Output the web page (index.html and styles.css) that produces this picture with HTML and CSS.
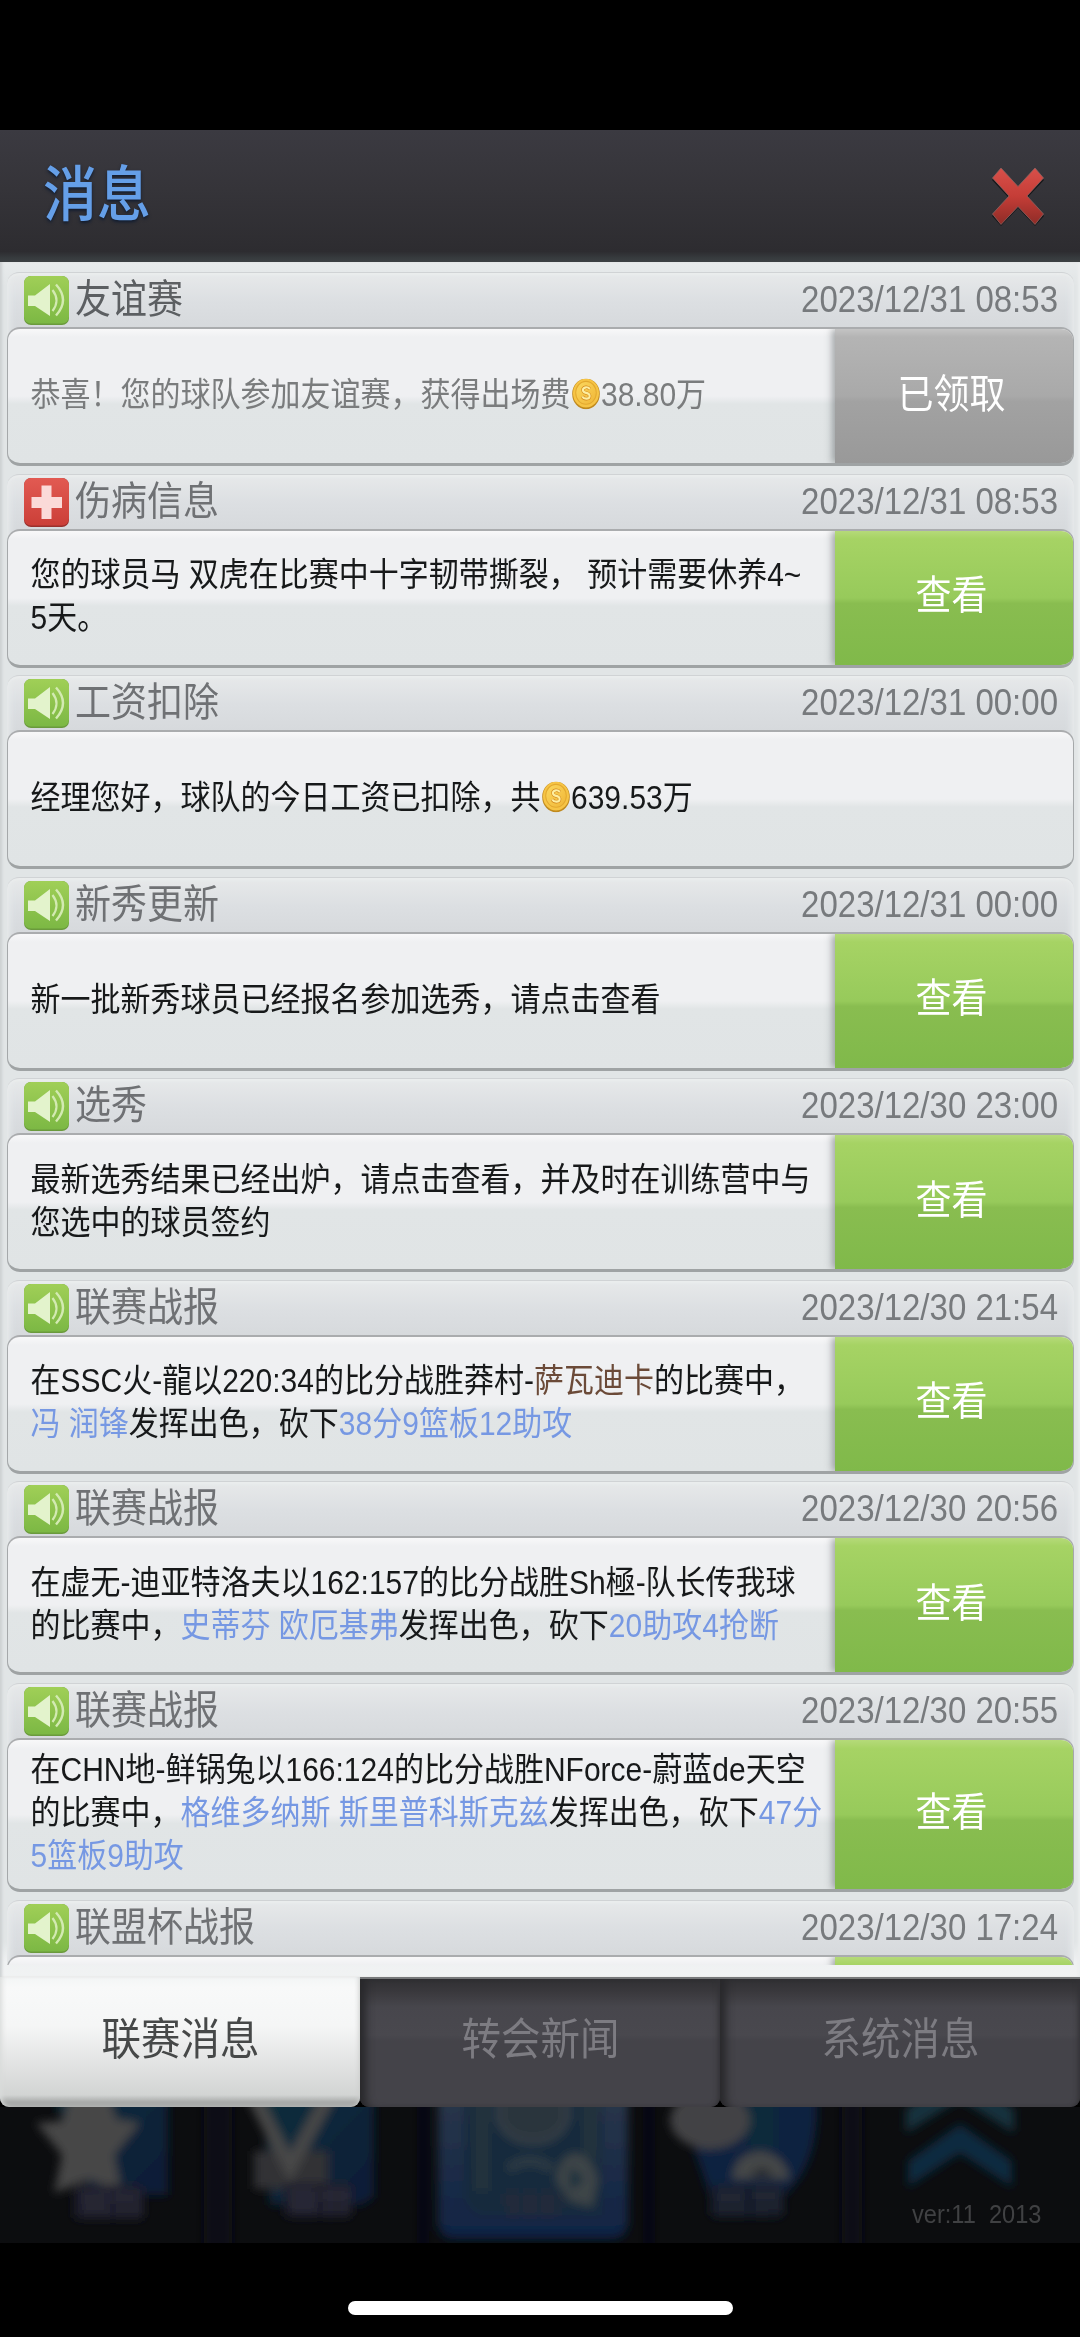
FILE: index.html
```html
<!DOCTYPE html>
<html lang="zh-CN">
<head>
<meta charset="utf-8">
<title>消息</title>
<link rel="stylesheet" href="styles.css">
</head>
<body>
<svg class="defs" width="0" height="0" aria-hidden="true">
  <defs>
    <linearGradient id="gGreen" x1="0" y1="0" x2="0" y2="1"><stop offset="0" stop-color="#a0cf57"/><stop offset="1" stop-color="#7cb844"/></linearGradient>
    <linearGradient id="gRed" x1="0" y1="0" x2="0" y2="1"><stop offset="0" stop-color="#e25a52"/><stop offset="1" stop-color="#cb3f38"/></linearGradient>
    <linearGradient id="gClose" x1="0" y1="0" x2="0" y2="1"><stop offset="0" stop-color="#d8504a"/><stop offset=".5" stop-color="#c53d37"/><stop offset="1" stop-color="#8e2c27"/></linearGradient>
    <linearGradient id="gCoin" x1="0" y1="0" x2="1" y2="1"><stop offset="0" stop-color="#fbd860"/><stop offset="1" stop-color="#f0b636"/></linearGradient>
  </defs>
  <symbol id="speaker" viewBox="0 0 45 49">
    <rect width="45" height="49" rx="7" fill="#6a9a3c"/>
    <rect width="45" height="47.5" rx="7" fill="url(#gGreen)"/>
    <path d="M4 19.5h7L26 8v32L11 30H4z" fill="#e3f3cc"/>
    <path d="M28.500 14q8 10.500 0 21" fill="none" stroke="#d3eab2" stroke-width="2.200"/>
    <path d="M32 8.500q14 15.500 0 31" fill="none" stroke="#d3eab2" stroke-width="2.400"/>
  </symbol>
  <symbol id="cross" viewBox="0 0 45 49">
    <rect width="45" height="49" rx="7" fill="#99302c"/>
    <rect width="45" height="47.500" rx="7" fill="url(#gRed)"/>
    <path d="M17.500 7.500h10V19H38v11H27.500v11h-10V30H7.500V19h10z" fill="#fbdad8"/>
  </symbol>
  <symbol id="coin" viewBox="0 0 28 28">
    <circle cx="14" cy="14" r="13.800" fill="#c08a1e"/>
    <circle cx="14" cy="13.300" r="13" fill="#f6c445"/>
    <circle cx="14" cy="13" r="10.300" fill="url(#gCoin)" stroke="#e3a92f" stroke-width="1"/>
    <path d="M17.800 9.700q-1.300-2-4-1.700-3.200.5-2.900 2.700.3 1.800 3.200 2.400 3.500.7 3.600 2.700 0 2.200-3.200 2.500-3 .1-4.300-2" fill="none" stroke="#d4891c" stroke-width="3.200"/>
    <path d="M17.800 9.700q-1.300-2-4-1.700-3.200.5-2.900 2.700.3 1.800 3.200 2.400 3.500.7 3.600 2.700 0 2.200-3.200 2.500-3 .1-4.300-2" fill="none" stroke="#fdeea0" stroke-width="2"/>
  </symbol>
</svg>

<header class="header">
  <h1 class="header-title tall">消息</h1>
  <svg class="close" viewBox="0 0 54 62">
    <path d="M10 3L27 21 44 3l9 11-16 17 16 19-9 10L27 42 10 60 1 50 17 31 1 14z" fill="#17171a"/>
    <path d="M10 2L27 20.500 44 2l8.500 10L36 30l16.500 18L44 58.500 27 40.500 10 58.500 1.500 48 18 30 1.500 12z" fill="url(#gClose)" stroke="#8d6361" stroke-width=".8"/>
  </svg>
</header>

<main class="panel">
  <ul class="list">
    <li class="item read">
      <div class="strip"><svg class="icon"><use href="#speaker"/></svg><span class="name tall">友谊赛</span><time class="tall">2023/12/31 08:53</time></div>
      <div class="card"><p class="msg tall">恭喜！您的球队参加友谊赛，获得出场费<svg class="coin"><use href="#coin"/></svg>38.80万</p><button class="btn done"><span class="tall">已领取</span></button></div>
    </li>
    <li class="item">
      <div class="strip"><svg class="icon"><use href="#cross"/></svg><span class="name tall">伤病信息</span><time class="tall">2023/12/31 08:53</time></div>
      <div class="card"><p class="msg tall">您的球员马 双虎在比赛中十字韧带撕裂， 预计需要休养4~<br>5天。</p><button class="btn"><span class="tall">查看</span></button></div>
    </li>
    <li class="item">
      <div class="strip"><svg class="icon"><use href="#speaker"/></svg><span class="name tall">工资扣除</span><time class="tall">2023/12/31 00:00</time></div>
      <div class="card"><p class="msg tall">经理您好，球队的今日工资已扣除，共<svg class="coin"><use href="#coin"/></svg>639.53万</p></div>
    </li>
    <li class="item">
      <div class="strip"><svg class="icon"><use href="#speaker"/></svg><span class="name tall">新秀更新</span><time class="tall">2023/12/31 00:00</time></div>
      <div class="card"><p class="msg tall">新一批新秀球员已经报名参加选秀，请点击查看</p><button class="btn"><span class="tall">查看</span></button></div>
    </li>
    <li class="item">
      <div class="strip"><svg class="icon"><use href="#speaker"/></svg><span class="name tall">选秀</span><time class="tall">2023/12/30 23:00</time></div>
      <div class="card"><p class="msg tall">最新选秀结果已经出炉，请点击查看，并及时在训练营中与<br>您选中的球员签约</p><button class="btn"><span class="tall">查看</span></button></div>
    </li>
    <li class="item">
      <div class="strip"><svg class="icon"><use href="#speaker"/></svg><span class="name tall">联赛战报</span><time class="tall">2023/12/30 21:54</time></div>
      <div class="card"><p class="msg tall">在SSC火-龍以220:34的比分战胜莽村-<b class="team">萨瓦迪卡</b>的比赛中，<br><b class="hl">冯 润锋</b>发挥出色，砍下<b class="hl">38分9篮板12助攻</b></p><button class="btn"><span class="tall">查看</span></button></div>
    </li>
    <li class="item">
      <div class="strip"><svg class="icon"><use href="#speaker"/></svg><span class="name tall">联赛战报</span><time class="tall">2023/12/30 20:56</time></div>
      <div class="card"><p class="msg tall">在虚无-迪亚特洛夫以162:157的比分战胜Sh極-队长传我球<br>的比赛中，<b class="hl">史蒂芬 欧厄基弗</b>发挥出色，砍下<b class="hl">20助攻4抢断</b></p><button class="btn"><span class="tall">查看</span></button></div>
    </li>
    <li class="item long">
      <div class="strip"><svg class="icon"><use href="#speaker"/></svg><span class="name tall">联赛战报</span><time class="tall">2023/12/30 20:55</time></div>
      <div class="card"><p class="msg tall">在CHN地-鲜锅兔以166:124的比分战胜NForce-蔚蓝de天空<br>的比赛中，<b class="hl">格维多纳斯 斯里普科斯克兹</b>发挥出色，砍下<b class="hl">47分</b><br><b class="hl">5篮板9助攻</b></p><button class="btn"><span class="tall">查看</span></button></div>
    </li>
    <li class="item">
      <div class="strip"><svg class="icon"><use href="#speaker"/></svg><span class="name tall">联盟杯战报</span><time class="tall">2023/12/30 17:24</time></div>
      <div class="card"><p class="msg"></p><button class="btn"></button></div>
    </li>
  </ul>
</main>

<nav class="tabs">
  <a class="tab active"><span class="tall">联赛消息</span></a>
  <a class="tab"><span class="tall">转会新闻</span></a>
  <a class="tab"><span class="tall">系统消息</span></a>
</nav>

<footer class="dock">
  <svg class="dock-art" viewBox="0 0 1080 136">
    <defs>
      <filter id="soft" x="-10%" y="-30%" width="120%" height="160%"><feGaussianBlur stdDeviation="5"/></filter>
      <linearGradient id="tile" x1="0" y1="0" x2="1" y2="1"><stop offset="0" stop-color="#10303b"/><stop offset="1" stop-color="#0e1b38"/></linearGradient>
      <linearGradient id="frame" x1="0" y1="0" x2="0" y2="1"><stop offset="0" stop-color="#2b374a"/><stop offset="1" stop-color="#0f2344"/></linearGradient>
    </defs>
    <g filter="url(#soft)">
      <path d="M204-20h28v176h-28zM420-20h6v176h-6zM646-20h6v176h-6zM842-20h20v176h-20z" fill="#111114"/>
      <path d="M50-20H168V88H90z" fill="url(#tile)"/>
      <path d="M72-14h36l8 26 24 4-26 32 8 38-32-14-36 14 8-38-26-32 26-2z" fill="#464646"/>
      <rect x="74" y="78" width="70" height="34" rx="5" fill="#1b1d2c"/>
      <path d="M80 90h28M82 100h26M90 82v28M104 82v28M112 90h24M122 82v28M136 82v28" stroke="#2a2b38" stroke-width="4"/>
      <path d="M262-20H374V90l-12 8H270z" fill="url(#tile)"/>
      <path d="M254 44h74v38h-74z" fill="#303235"/>
      <path d="M254-10L290 60 328-10" fill="none" stroke="#474746" stroke-width="14"/>
      <rect x="284" y="76" width="68" height="34" rx="5" fill="#1d1f2c"/>
      <path d="M288 88h28M290 98h26M298 80v28M310 80v28M322 88h28M330 80v28M344 80v28" stroke="#2d2e3b" stroke-width="4"/>
      <path d="M438-20H628V114q0 18-18 18H456q-18 0-18-18z" fill="url(#frame)"/>
      <path d="M464-20H602V108H480q-16-8-16-24z" fill="#152a3c"/>
      <path d="M482-10V84M590-10V50" stroke="#28353e" stroke-width="12"/>
      <ellipse cx="533" cy="6" rx="34" ry="28" fill="#2a363d" stroke="#343e45" stroke-width="8"/>
      <path d="M508 62q22-16 44 0" fill="none" stroke="#303c45" stroke-width="8"/>
      <path d="M556 74q2-26 20-28 18 4 22 28l-6 26-22-6z" fill="#3e4446"/>
      <path d="M570 60l14 12-14 12z" fill="#172d3e"/>
      <path d="M500 92h66M506 104h56M512 82v28M530 82v28M548 82v28" stroke="#262c39" stroke-width="5"/>
      <path d="M700-20H816Q822 50 790 82L768 104 712 94 690 30z" fill="#0e2040"/>
      <path d="M748-20h28v60h-28z" fill="#102c3b"/>
      <ellipse cx="710" cy="13" rx="40" ry="29" fill="#434344"/>
      <path d="M732 72q2-26 29-28 24 4 29 28z" fill="#454646"/>
      <path d="M750 70q12-18 24 0z" fill="#22262d"/>
      <rect x="710" y="78" width="74" height="32" rx="6" fill="#161b2b"/>
      <path d="M716 90h28M724 80v28M738 80v28M752 88h28M762 80v28M775 80v24" stroke="#252b39" stroke-width="4"/>
      <path d="M906 2l54-40 54 40v24L960-8 906 26z" fill="#12303d"/>
      <path d="M908 54l52-37 52 37v26L960 46 908 80z" fill="#112941"/>
    </g>
  </svg>
  <span class="version tall">ver:11&nbsp; 2013</span>
</footer>
<div class="home-area"><div class="home-bar"></div></div>
</body>
</html>
```
FILE: styles.css
```css
* { box-sizing: border-box; }

body {
  margin: 0;
  padding-top: 130px;
  width: 1080px;
  height: 2337px;
  overflow: hidden;
  background: #000;
  font-family: "Liberation Sans", "Noto Sans CJK SC", sans-serif;
}

.defs { display: block; width: 0; height: 0; }

/* The interface type is about 11% taller than it is wide. */
.tall { display: block; transform: scaleY(1.11); }

.header {
  display: flex;
  align-items: center;
  justify-content: space-between;
  height: 132px;
  padding: 0 35px 0 43px;
  background: linear-gradient(#3b3a41, #353439 45%, #2d2c30 92%, #373b3e 97%, #3d4143);
}
.header-title {
  margin: 0 0 3px;
  font-size: 54px;
  line-height: 60px;
  font-weight: 500;
  color: #659fe8;
  text-shadow: 0 2px 3px #111c30;
}
.close { width: 54px; height: 62px; margin-top: 2px; }

.panel {
  height: 1715px;
  padding-top: 2px;
  background: linear-gradient(#e8ebec, #e1e5e6 24px, #e1e5e6 1680px, #eff1f2 1700px, #f1f3f3);
  box-shadow: inset 3px 0 3px -1px #cdd0d1, inset -3px 0 3px -1px #eceeef;
}

.list {
  display: flex;
  flex-direction: column;
  gap: 7.5px;
  height: 1701px;
  margin: 0;
  padding: 8px 6px 0 7px;
  overflow: hidden;
  list-style: none;
}
.item { flex: none; height: 194px; display: flex; flex-direction: column; }
.item.long { height: 209.5px; }

.strip {
  flex: none;
  display: flex;
  align-items: flex-start;
  height: 69px;
  padding: 3px 16px 0 17px;
  margin-bottom: -14px;
  border-radius: 12px 12px 0 0;
  border-top: 1px solid #d0d3d5;
  background: linear-gradient(#e7e9ea, #dcdfe2 28px, #d6d9dc 56px);
  box-shadow: inset 7px 0 6px -4px #e7eaeb, inset -7px 0 6px -4px #e7eaeb, inset 0 2px 2px #eceeee;
}
.icon { flex: none; width: 45px; height: 49px; }
.name { margin: 6px 0 0 6px; font-size: 36px; line-height: 36px; color: #6f7174; }
.strip time { margin: 5px 0 0 auto; font-size: 33px; line-height: 37px; color: #777a7d; }
.read .name { color: #5c5f62; }

.card {
  position: relative;
  flex: 1;
  display: flex;
  align-items: stretch;
  border: 1px solid #a5a8aa;
  border-top: 2px solid #aaacae;
  border-bottom: 3px solid #9fa3a4;
  border-radius: 13px;
  overflow: hidden;
  background: linear-gradient(#f8f8f9, #eff0f2 6%, #eff0f2 50%, #e1e5e6 56%, #e0e4e5);
}
.msg {
  flex: 1;
  align-self: center;
  margin: -3px 0 0;
  padding-left: 22.5px;
  font-size: 30px;
  line-height: 39px;
  white-space: nowrap;
  color: #17191a;
}
.read .msg { color: #7a7c7d; }
.msg b { font-weight: 400; }
.hl { color: #7698e3; }
.team { color: #6b4a38; }
.coin { width: 28px; height: 28px; margin: 0 1.5px 0 1px; vertical-align: -3px; }

.btn {
  flex: none;
  display: flex;
  align-items: center;
  justify-content: center;
  width: 239px;
  margin-right: -1px;
  padding: 0 6px 3px 0;
  border: 0;
  border-radius: 0 11px 11px 0;
  font: 400 36px/40px "Liberation Sans", "Noto Sans CJK SC", sans-serif;
  color: #fff;
  background: linear-gradient(#b5da79, #a6d364 6%, #97ca5b 50%, #89bd50 54%, #80b94a);
  box-shadow: -3px 0 7px rgba(90, 95, 98, .5);
}
.btn.done { background: linear-gradient(#c4c4c4, #b4b4b4 6%, #a9a9a9 50%, #a2a2a2 54%, #999); }

.tabs { display: grid; grid-template-columns: repeat(3, 1fr); height: 130px; background: #000; }
.tab {
  display: flex;
  align-items: center;
  justify-content: center;
  border-top: 2px solid #77797a;
  border-radius: 0 0 9px 9px;
  font-size: 39.500px;
  line-height: 44px;
  padding: 0 0 8px 1px;
  color: #7d7c82;
  background: linear-gradient(#303033, #39383c 12px, #47464c 28px, #49484e 56px, #444349 62px, #444349);
  box-shadow: inset 12px 0 9px -6px #28282b, inset -5px 0 5px -3px #333236;
}
.tab.active {
  border-top: 0;
  padding-bottom: 6px;
  color: #464848;
  background: linear-gradient(#f3f5f5, #f8f9f9 10px, #f5f6f6 48px, #d2d4d3 118px, #a9abaa 125px, #a9abaa);
  box-shadow: inset 5px 0 5px -3px #d9dbda, inset -4px 0 5px -3px #cbcdcc;
}

.dock { position: relative; height: 136px; background: #0c0d0f; overflow: hidden; }
.dock-art { display: block; width: 1080px; height: 136px; }
.version {
  position: absolute;
  left: 912px;
  top: 94px;
  font-size: 23.600px;
  line-height: 27px;
  white-space: nowrap;
  color: #404143;
}

.home-area { display: flex; justify-content: center; height: 94px; padding-top: 58px; }
.home-bar { width: 385px; height: 14px; border-radius: 7px; background: #fff; }
```
